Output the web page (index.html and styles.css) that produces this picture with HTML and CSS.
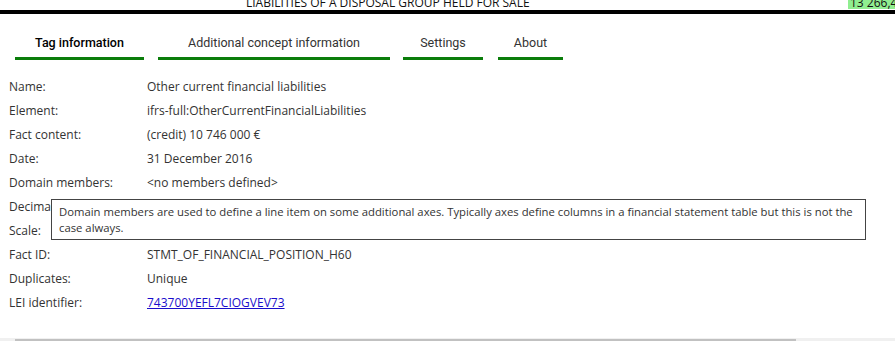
FILE: index.html
```html
<!DOCTYPE html>
<html lang="en">
<head>
    <meta charset="UTF-8">
    <meta name="viewport" content="width=device-width, initial-scale=1.0">
    <title>Fact details</title>
    <link rel="stylesheet" href="styles.css">
</head>
<body>
    <div id="report-strip">
        <span class="strip-title">LIABILITIES OF A DISPOSAL GROUP HELD FOR SALE</span>
        <span class="strip-amount">13 266,4</span>
    </div>

    <div id="viewer">
        <nav id="tabs">
            <div class="tab tab-tag active">Tag information</div>
            <div class="tab tab-concept">Additional concept information</div>
            <div class="tab tab-settings">Settings</div>
            <div class="tab tab-about">About</div>
        </nav>

        <div id="tag-info">
            <div class="label">Name:</div>
            <div class="value">Other current financial liabilities</div>

            <div class="label">Element:</div>
            <div class="value">ifrs-full:OtherCurrentFinancialLiabilities</div>

            <div class="label">Fact content:</div>
            <div class="value">(credit) 10 746 000 €</div>

            <div class="label">Date:</div>
            <div class="value">31 December 2016</div>

            <div class="label">Domain members:</div>
            <div class="value">&lt;no members defined&gt;</div>

            <div class="label">Decimals:</div>
            <div class="value">-3</div>

            <div class="label">Scale:</div>
            <div class="value">3</div>

            <div class="label">Fact ID:</div>
            <div class="value">STMT_OF_FINANCIAL_POSITION_H60</div>

            <div class="label">Duplicates:</div>
            <div class="value">Unique</div>

            <div class="label">LEI identifier:</div>
            <div class="value"><a href="#">743700YEFL7CIOGVEV73</a></div>

            <div class="tooltip">Domain members are used to define a line item on some additional axes. Typically axes define columns in a financial statement table but this is not the case always.</div>
        </div>
    </div>

    <div id="h-scroll">
        <div class="thumb"></div>
    </div>
</body>
</html>
```

FILE: styles.css
```css
* {
    box-sizing: border-box;
    margin: 0;
    padding: 0;
}

html, body {
    height: 100%;
}

body {
    font-family: 'Open Sans', 'Noto Sans', sans-serif;
    font-size: 12px;
    color: #333;
    background: white;
    display: flex;
    flex-direction: column;
    overflow: hidden;
}

#report-strip {
    display: grid;
    grid-template-columns: 848px 1fr;
    height: 10px;
    line-height: 6px;
    overflow: hidden;
    white-space: nowrap;
    color: #111;
    border-bottom: 4px solid black;
    box-sizing: content-box;
}

.strip-title {
    padding-left: 246px;
    overflow: hidden;
}

.strip-amount {
    display: block;
    height: 9px;
    padding-left: 2px;
    background: #90ee90;
    overflow: hidden;
}

#viewer {
    flex: 1;
    display: flex;
    flex-direction: column;
}

#tabs {
    display: flex;
    padding-left: 15px;
    margin-top: 21px;
    font-family: Roboto, 'Liberation Sans', sans-serif;
    font-size: 12.5px;
    line-height: 16px;
}

.tab {
    padding-bottom: 6px;
    text-align: center;
    border-bottom: 3px solid #0a7d0a;
    color: #333;
}

.tab.active {
    color: #000;
    font-weight: 500;
}

.tab-tag { width: 129px; }
.tab-concept { width: 232px; margin-left: 14px; }
.tab-settings { width: 80px; margin-left: 13px; }
.tab-about { width: 65px; margin-left: 15px; }

#tag-info {
    position: relative;
    display: grid;
    grid-template-columns: 138px 1fr;
    grid-auto-rows: 24px;
    align-items: center;
    padding-left: 9px;
    margin-top: 14px;
}

#tag-info a {
    color: #1a0dcc;
}

.tooltip {
    position: absolute;
    left: 51px;
    top: 125px;
    width: 815px;
    padding: 4px 7px 3px;
    font-size: 11.3px;
    line-height: 16px;
    background: white;
    border: 1px solid #444;
}

#h-scroll {
    height: 3px;
    background: #f0f0f0;
    display: flex;
    align-items: flex-end;
}

#h-scroll .thumb {
    margin-left: 15px;
    width: 781px;
    height: 2px;
    background: #c1c1c1;
}
```
